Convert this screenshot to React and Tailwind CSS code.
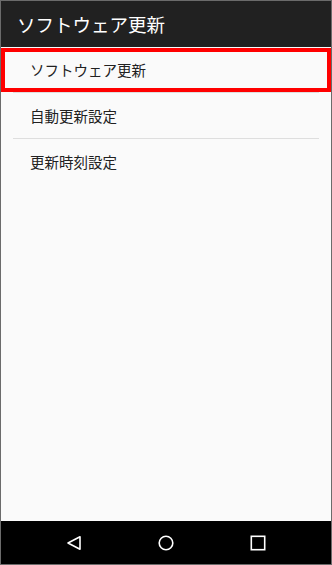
import React from "react";

const font = { fontFamily: '"Noto Sans CJK JP", "Noto Sans", sans-serif' };

export default function App() {
  const items = ["ソフトウェア更新", "自動更新設定", "更新時刻設定"];
  return (
    <div className="w-[332px] h-[565px] border border-[#6b6b6b] bg-[#fafafa] flex flex-col relative overflow-hidden" style={font}>
      <div className="h-[46px] bg-[#212121] flex items-center pl-[16px] shrink-0">
        <span className="text-white text-[18.5px] leading-none">ソフトウェア更新</span>
      </div>
      <div className="flex flex-col">
        {items.map((t, i) => (
          <div key={t} className="flex flex-col">
            <div className="h-[45px] flex items-center pl-[29px] text-[14.5px] text-[#212121]">{t}</div>
            {i < 2 && <div className="h-px bg-[#dedede] mx-[12px]" />}
          </div>
        ))}
      </div>
      <div className="flex-1" />
      <div className="h-[43px] bg-black flex items-center justify-center gap-[76px] shrink-0">
        <svg width="16" height="16" viewBox="0 0 16 16">
          <path d="M14 1.8 L2 8 L14 14.2 Z" fill="none" stroke="white" strokeWidth="1.6" strokeLinejoin="round" />
        </svg>
        <svg width="16" height="16" viewBox="0 0 16 16">
          <circle cx="8" cy="8" r="6.8" fill="none" stroke="white" strokeWidth="1.6" />
        </svg>
        <svg width="16" height="16" viewBox="0 0 16 16">
          <rect x="1.3" y="1.3" width="13.4" height="13.4" fill="none" stroke="white" strokeWidth="1.6" />
        </svg>
      </div>
      <div className="absolute left-0 right-0 top-[47px] h-[44px] border-[4px] border-[#ff0000] pointer-events-none" />
    </div>
  );
}
